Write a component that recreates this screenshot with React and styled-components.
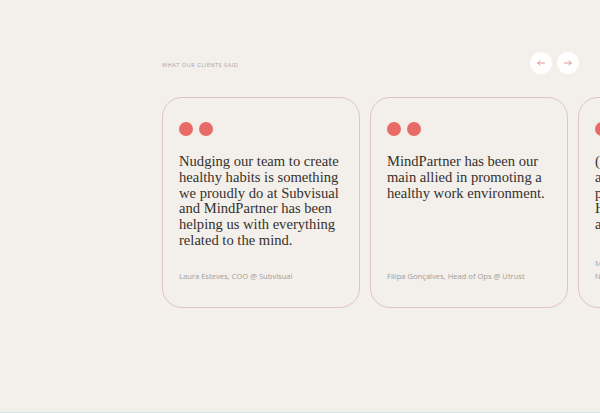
import React from "react"
import styled, { createGlobalStyle } from "styled-components"

const GlobalStyle = createGlobalStyle`
  html, body {
    margin: 0;
    padding: 0;
    background: #f3efeb;
  }
  * { box-sizing: border-box; }
`

const testimonials = [
  {
    quote: "Nudging our team to create healthy habits is something we proudly do at Subvisual and MindPartner has been helping us with everything related to the mind.",
    author: "Laura Esteves, COO @ Subvisual",
  },
  {
    quote: "MindPartner has been our main allied in promoting a healthy work environment.",
    author: "Filipa Gonçalves, Head of Ops @ Utrust",
  },
  {
    quote: "(...) their team is always available and ready to provide professional help. HR team loves working alongside MindPartner.",
    author: "Mariana Duarte, People & Culture Manager @ Nmotion",
  },
]

const Page = styled.div`
  height: 413px;
  display: flex;
  flex-direction: column;
  overflow: hidden;
`

const Section = styled.section`
  flex: 1;
  padding: 52px 0 0 162px;
  display: flex;
  flex-direction: column;
  gap: 23px;
`

const Footer = styled.div`
  height: 1px;
  background: #d6e4e7;
`

const Header = styled.div`
  display: flex;
  align-items: center;
  justify-content: space-between;
  padding-right: 21px;
`

const Label = styled.span`
  font-family: "Open Sans", "Liberation Sans", sans-serif;
  font-size: 5.5px;
  letter-spacing: 0.55px;
  text-transform: uppercase;
  color: #a8a29e;
  padding-top: 4px;
`

const Nav = styled.div`
  display: flex;
  gap: 5px;
`

const NavButton = styled.button`
  width: 22px;
  height: 22px;
  border-radius: 50%;
  border: none;
  background: #ffffff;
  padding: 0;
  display: flex;
  align-items: center;
  justify-content: center;
  cursor: pointer;
`

const Track = styled.div`
  display: flex;
  gap: 10px;
`

const Card = styled.article`
  flex: 0 0 198px;
  height: 211px;
  border: 1px solid #e2c3bd;
  border-radius: 20px;
  padding: 24px 16px 0 16px;
  display: flex;
  flex-direction: column;
`

const Dots = styled.div`
  display: flex;
  gap: 6px;
  margin-bottom: 18px;
`

const Dot = styled.span`
  width: 14px;
  height: 14px;
  border-radius: 50%;
  background: #e86b67;
`

const Quote = styled.p`
  margin: 0;
  font-family: "Liberation Serif", serif;
  font-size: 14.6px;
  line-height: 15.8px;
  color: #36312d;
  flex: 1;
`

const Author = styled.p`
  margin: 0 0 24px;
  font-family: "Open Sans", "Liberation Sans", sans-serif;
  font-size: 7.6px;
  line-height: 13px;
  color: #a39d99;
`

const Arrow = ({ dir }) => (
  <svg width="8" height="6" viewBox="0 0 8 6" fill="none" stroke="#d98a8f" strokeWidth="0.9" strokeLinecap="round" strokeLinejoin="round">
    {dir === "left"
      ? <path d="M7.5 3H0.8M3 0.8L0.8 3L3 5.2" />
      : <path d="M0.5 3H7.2M5 0.8L7.2 3L5 5.2" />}
  </svg>
)

export default function App() {
  return (
    <>
      <GlobalStyle />
      <Page>
        <Section>
          <Header>
            <Label>What our clients said</Label>
            <Nav>
              <NavButton aria-label="Previous"><Arrow dir="left" /></NavButton>
              <NavButton aria-label="Next"><Arrow dir="right" /></NavButton>
            </Nav>
          </Header>
          <Track>
            {testimonials.map((t, i) => (
              <Card key={i}>
                <Dots><Dot /><Dot /></Dots>
                <Quote>{t.quote}</Quote>
                <Author>{t.author}</Author>
              </Card>
            ))}
          </Track>
        </Section>
        <Footer />
      </Page>
    </>
  )
}
